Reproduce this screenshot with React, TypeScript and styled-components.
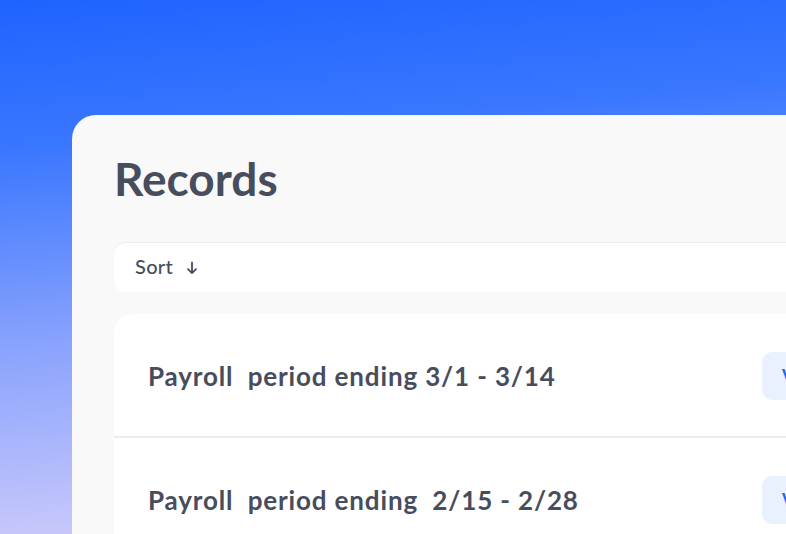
import React from "react";
import styled, {createGlobalStyle} from "styled-components";

const GlobalStyle = createGlobalStyle`
  html, body {
    margin: 0;
    padding: 0;
    overflow: hidden;
  }

  body {
    font-family: "Lato", "Inter", sans-serif;
    color: #474d5c;
  }
`;

const Page = styled.div`
  width: 786px;
  height: 534px;
  overflow: hidden;
  background: linear-gradient(175deg, #1f63ff 0%, #3a77ff 25%, #8aa3fd 58%, #ddd3fa 100%);
  padding: 115px 0 0 72px;
  box-sizing: border-box;
`;

const Panel = styled.section`
  width: 900px;
  min-height: 600px;
  background: #f9f9f9;
  border-radius: 24px 0 0 0;
  padding: 38px 0 0 42px;
  box-sizing: border-box;
  display: flex;
  flex-direction: column;
`;

const Title = styled.h1`
  margin: 0;
  font-size: 46px;
  font-weight: 700;
  line-height: 52px;
  color: #474d5c;
`;

const SortBar = styled.div`
  margin-top: 37px;
  height: 50px;
  background: #ffffff;
  border-top: 1px solid #ebebeb;
  border-radius: 12px 0 0 12px;
  display: flex;
  align-items: center;
  padding-left: 21px;
  gap: 13px;
  font-size: 20px;
  font-weight: 500;
  letter-spacing: 0.3px;
  padding-bottom: 3px;
  box-sizing: border-box;
`;

const SortArrow = styled.svg`
  width: 12px;
  height: 14px;
  margin-top: 4px;
`;

const List = styled.div`
  margin-top: 22px;
  width: 772px;
  background: #ffffff;
  border-radius: 20px 0 0 0;
  display: flex;
  flex-direction: column;
`;

const Row = styled.div<{ $divider?: boolean }>`
  height: 124px;
  display: flex;
  align-items: center;
  justify-content: space-between;
  padding: 2px 34px 0;
  box-sizing: border-box;
  border-bottom: 2px solid ${p => (p.$divider ? "#ececec" : "transparent")};
`;

const RowTitle = styled.span`
  font-size: 26px;
  font-weight: 700;
  letter-spacing: 0.85px;
  white-space: pre;
  color: #474d5c;
`;

const ViewButton = styled.button`
  width: 90px;
  height: 48px;
  border: none;
  border-radius: 10px;
  background: #e9f0fe;
  color: #2a66f5;
  font-family: inherit;
  font-size: 18px;
  font-weight: 700;
  text-align: left;
  padding: 0 0 0 20px;
`;

const records = [
    "Payroll  period ending 3/1 - 3/14",
    "Payroll  period ending  2/15 - 2/28",
];

export default function App() {
    return (
        <>
            <GlobalStyle/>
            <Page>
                <Panel>
                    <Title>Records</Title>
                    <SortBar>
                        <span>Sort</span>
                        <SortArrow viewBox="0 0 12 14" fill="none" stroke="#474d5c" strokeWidth="1.8"
                                   strokeLinecap="round" strokeLinejoin="round">
                            <path d="M6 1.5v10.5M2 8.2l4 4 4-4"/>
                        </SortArrow>
                    </SortBar>
                    <List>
                        {records.map((r, i) => (
                            <Row key={r} $divider={i === 0}>
                                <RowTitle>{r}</RowTitle>
                                <ViewButton>View</ViewButton>
                            </Row>
                        ))}
                    </List>
                </Panel>
            </Page>
        </>
    );
}
